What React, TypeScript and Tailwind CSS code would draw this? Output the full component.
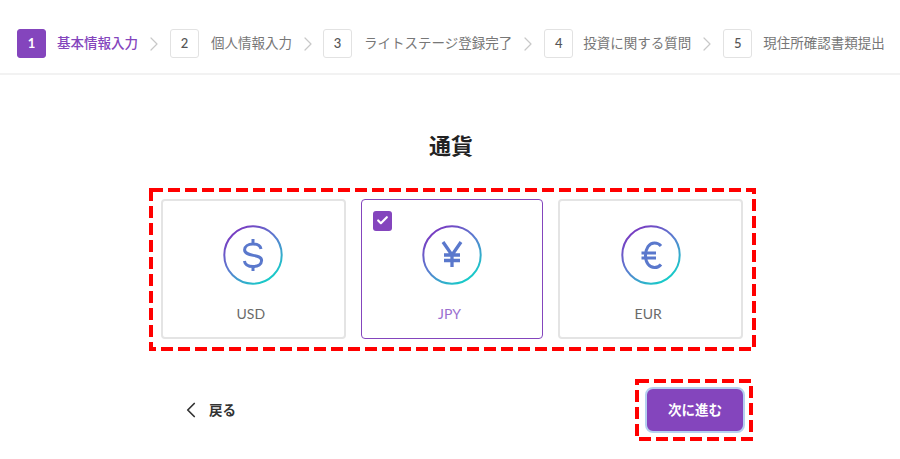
import type { ReactNode } from 'react';
import { Check, ChevronLeft, ChevronRight } from 'lucide-react';
import clsx from 'clsx';

const steps = [
    { no: 1, name: '基本情報入力', gap: 'ml-[11px]', arrow: '' },
    { no: 2, name: '個人情報入力', gap: 'ml-[12px]', arrow: 'mr-[4px]' },
    { no: 3, name: 'ライトステージ登録完了', gap: 'ml-[12px]', arrow: 'mr-[3px]' },
    { no: 4, name: '投資に関する質問', gap: 'ml-[10px]', arrow: 'mr-[4px]' },
    { no: 5, name: '現住所確認書類提出', gap: 'ml-[11px]', arrow: 'mr-[4px]' },
];

const currencies = [
    { code: 'USD', id: 'usd', path: 'M38 24c-.6-3-3.600-5-8-5-5 0-8.400 2.400-8.400 5.800 0 7.600 17 3.600 17 10.800 0 3.600-3.600 6-8.600 6-4.600 0-8-2.200-8.600-5.600M30 14v5M30 41v5', width: 3 },
    { code: 'JPY', id: 'jpy', path: 'M21 17L30 30L39 17M30 30V42M22 30H38M22 35.500H38', width: 3.300 },
    { code: 'EUR', id: 'eur', path: 'M40 21c-1.600-2-4-3-6.500-3-5.400 0-9 5.400-9 12.500 0 7 3.600 12 9 12 2.500 0 5-1 6.500-3M20.500 28H35M20.500 33H35', width: 3 },
];

function CurrencyIcon({ id, path, width }: { id: string; path: string; width: number }) {
    return (
        <svg width="60" height="60" viewBox="0 0 60 60" fill="none">
            <defs>
                <linearGradient id={id} x1="0.15" y1="0.05" x2="0.8" y2="0.95">
                    <stop offset="0" stopColor="#7b35c0" />
                    <stop offset="0.5" stopColor="#5a7fd0" />
                    <stop offset="1" stopColor="#14cfc8" />
                </linearGradient>
            </defs>
            <circle cx="30" cy="30" r="28.700" stroke={`url(#${id})`} strokeWidth="2" />
            <path d={path} stroke="#5a78cc" strokeWidth={width} />
        </svg>
    );
}

// red dashed annotation frame laid over its content
function DashedFrame({ className, children }: { className: string; children: ReactNode }) {
    return (
        <div className={clsx("relative", className)}>
            {children}
            <svg className="pointer-events-none absolute inset-0 h-full w-full" fill="none">
                <rect x="2" y="2" width="calc(100% - 4px)" height="calc(100% - 4px)" stroke="#ff0000" strokeWidth="4" strokeDasharray="12 5" />
            </svg>
        </div>
    );
}

export default function App() {
    return (
        <div className="h-[459px] w-[900px] overflow-hidden bg-white font-['Lato','Noto_Sans_CJK_JP',sans-serif]">
            <header className="flex h-[75px] items-center border-b-2 border-[#f2f2f2] pt-[14px] pl-[17px] whitespace-nowrap">
                {steps.map((step, i) => (
                    <div key={step.no} className="flex items-center">
                        {i > 0 && <ChevronRight size={24} strokeWidth={1.200} className={clsx("ml-[4px] text-[#c8c8c8]", step.arrow)} />}
                        <div className={clsx(
                            "flex h-[29px] w-[29px] items-center justify-center rounded-[3px] border text-[13px]",
                            i === 0 ? "border-[#8445bd] bg-[#8445bd] font-bold text-white" : "border-[#e2e2e2] bg-white font-medium text-[#555]"
                        )}>
                            {step.no}
                        </div>
                        <span className={clsx(
                            step.gap,
                            "text-[13.500px] leading-none",
                            i === 0 ? "font-medium text-[#8445bd]" : "text-[#777]"
                        )}>
                            {step.name}
                        </span>
                    </div>
                ))}
            </header>

            <h1 className="mt-[56px] ml-[2px] text-center text-[22px] leading-[30px] font-bold text-[#222]">通貨</h1>

            <DashedFrame className="mt-[27px] ml-[149px] flex h-[163px] w-[607px] gap-[15px] pt-[11px] pr-[13px] pb-[12px] pl-[12px]">
                {currencies.map((c) => {
                    const selected = c.code === 'JPY';
                    return (
                        <div
                            key={c.code}
                            className={clsx(
                                "relative flex h-[140px] flex-1 flex-col items-center rounded-[4px]",
                                selected ? "border border-[#8445bd] pt-[25px]" : "border-2 border-[#e4e4e4] pt-[24px]"
                            )}
                        >
                            {selected && (
                                <div className="absolute top-[11px] left-[11px] flex h-[19.500px] w-[19.500px] items-center justify-center rounded-[3px] bg-[#8445bd]">
                                    <Check size={13} strokeWidth={4} className="text-white" />
                                </div>
                            )}
                            <CurrencyIcon id={c.id} path={c.path} width={c.width} />
                            <span className={clsx(
                                "mt-[20px] mr-[5px] text-[14px] leading-[17px]",
                                selected ? "text-[#9a6fd0]" : "text-[#6a6a6a]"
                            )}>
                                {c.code}
                            </span>
                        </div>
                    );
                })}
            </DashedFrame>

            <div className="mt-[28px] flex items-start justify-between pr-[147px] pl-[178px]">
                <div className="flex items-center gap-[5px] pt-[18px]">
                    <ChevronLeft size={26} strokeWidth={1.600} className="text-[#333]" />
                    <span className="text-[13.500px] leading-[20px] font-bold text-[#333]">戻る</span>
                </div>
                <DashedFrame className="flex pt-[8px] pr-[8px] pb-[8px] pl-[10px]">
                    <button className="flex h-[46px] w-[100px] items-center justify-center rounded-[8px] border-2 border-[#b5d0f0] bg-[#8445bd] text-[13.500px] font-bold text-white">
                        次に進む
                    </button>
                </DashedFrame>
            </div>
        </div>
    );
}
